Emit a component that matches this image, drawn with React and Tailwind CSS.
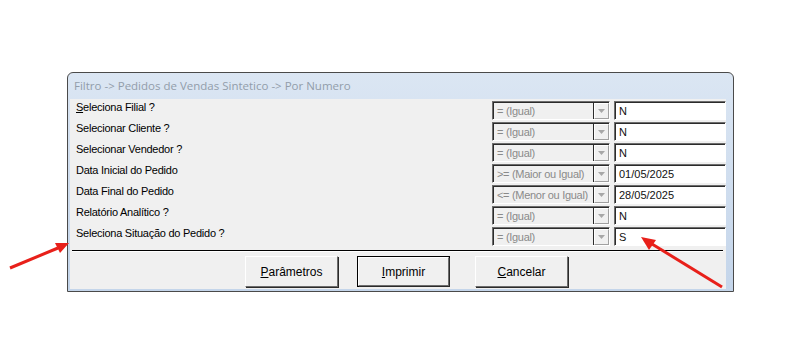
const rows = [
  { label: 'Seleciona Filial ?', op: '= (Igual)', value: 'N', mnemonic: true },
  { label: 'Selecionar Cliente ?', op: '= (Igual)', value: 'N' },
  { label: 'Selecionar Vendedor ?', op: '= (Igual)', value: 'N' },
  { label: 'Data Inicial do Pedido', op: '>= (Maior ou Igual)', value: '01/05/2025' },
  { label: 'Data Final do Pedido', op: '<= (Menor ou Igual)', value: '28/05/2025' },
  { label: 'Relatório Analítico ?', op: '= (Igual)', value: 'N' },
  { label: 'Seleciona Situação do Pedido ?', op: '= (Igual)', value: 'S' },
];

function Combo({ text }) {
  return (
    <div className="flex h-[19px] w-[118px] border border-t-[#6d6d6d] border-l-[#6d6d6d] border-b-white border-r-white bg-[#f0f0f0]">
      <div className="flex flex-1 items-center border-t border-l border-[#2b2b2b] pl-[3px] text-[11px] tracking-[-0.3px] text-[#8a8a8a] whitespace-nowrap overflow-hidden">
        {text}
      </div>
      <div className="flex w-[16px] items-center justify-center border-t border-l border-[#2b2b2b]">
        <div className="flex h-full w-full items-center justify-center border border-t-white border-l-white border-b-[#a0a0a0] border-r-[#a0a0a0] bg-[#f0f0f0]">
          <svg width="7" height="4" viewBox="0 0 7 4"><path d="M0 0h7L3.5 4z" fill="#a7a7a7" /></svg>
        </div>
      </div>
    </div>
  );
}

function Field({ text }) {
  return (
    <div className="h-[19px] w-[112px] border border-t-[#6d6d6d] border-l-[#6d6d6d] border-b-white border-r-white">
      <div className="flex h-full items-center border-t border-l border-[#2b2b2b] bg-white pl-[3px] text-[11px] text-[#111]">
        {text}
      </div>
    </div>
  );
}

function Btn({ children, main, className = '' }) {
  return (
    <button className={`h-[31px] w-[93px] ${main ? 'border border-black' : ''} ${className}`}>
      <div className="flex h-full w-full items-center justify-center border border-t-white border-l-white border-b-[#6d6d6d] border-r-[#6d6d6d] bg-[#f0f0f0] text-[12px] text-black shadow-[1px_1px_0_#2b2b2b]">
        {children}
      </div>
    </button>
  );
}

export default function App() {
  return (
    <div className="relative h-[339px] w-[803px] bg-white font-['Liberation_Sans',Arial,sans-serif]">
      <div className="ml-[67px] pt-[72px]">
        <div className="w-[667px] rounded-t-[6px] border border-[#4a4a4a] bg-gradient-to-b from-[#dbe6f3] to-[#c4d5ea]">
          <div className="flex h-[26px] items-center pl-[6px] font-['Open_Sans',sans-serif] text-[11.5px] text-[#929daa]">
            Filtro -&gt; Pedidos de Vendas Sintetico -&gt; Por Numero
          </div>
          <div className="ml-[2px] mr-[7px] mb-[2px] bg-[#f0f0f0]">
            <div className="flex flex-col gap-[2px] pt-[2px]">
              {rows.map((r) => (
                <div key={r.label} className="flex h-[19px]">
                  <div className="flex-1 pl-[6px] text-[11px] leading-[12px] tracking-[-0.25px] text-black">
                    {r.mnemonic ? (
                      <><span className="underline">S</span>{r.label.slice(1)}</>
                    ) : r.label}
                  </div>
                  <Combo text={r.op} />
                  <div className="w-[4px]" />
                  <Field text={r.value} />
                </div>
              ))}
            </div>
            <div className="mt-[4px] ml-[2px] mr-[3px] h-[2px] border-t border-black border-b border-b-white" />
            <div className="flex pt-[4px] pb-[2px] pl-[175px]">
              <Btn><span className="underline">P</span>arâmetros</Btn>
              <Btn main className="ml-[19px]"><span className="underline">I</span>mprimir</Btn>
              <Btn className="ml-[25px]"><span className="underline">C</span>ancelar</Btn>
            </div>
          </div>
        </div>
      </div>
      <svg className="absolute left-0 top-0 pointer-events-none" width="803" height="339">
        <g stroke="#e8201a" strokeWidth="3" fill="#e8201a">
          <line x1="10" y1="268" x2="58" y2="248" />
          <polygon points="69,243 55,243 60,253" stroke="none" />
          <line x1="722" y1="287" x2="652" y2="244" />
          <polygon points="641,237 649,250 656,240" stroke="none" />
        </g>
      </svg>
    </div>
  );
}
